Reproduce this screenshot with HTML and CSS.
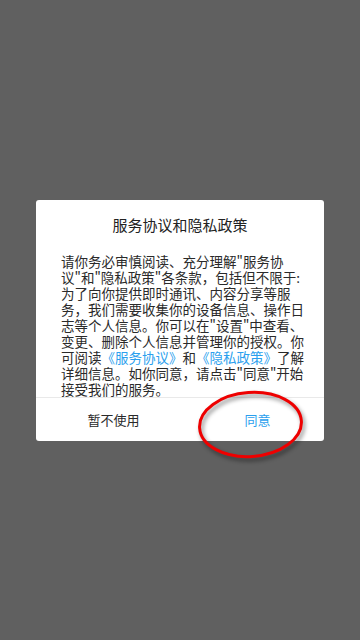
FILE: index.html
```html
<!DOCTYPE html>
<html lang="zh-CN">
<head>
<meta charset="utf-8">
<meta name="viewport" content="width=360, initial-scale=1">
<title>服务协议和隐私政策</title>
<link rel="stylesheet" href="styles.css">
</head>
<body>
<div class="screen">
  <div class="dialog">
    <div class="dialog-title">服务协议和隐私政策</div>
    <div class="dialog-body">请你务必审慎阅读、充分理解"服务协<br>议"和"隐私政策"各条款，包括但不限于:<br>为了向你提供即时通讯、内容分享等服<br>务，我们需要收集你的设备信息、操作日<br>志等个人信息。你可以在"设置"中查看、<br>变更、删除个人信息并管理你的授权。你<br>可阅读<span class="link">《服务协议》</span>和<span class="link">《隐私政策》</span>了解<br>详细信息。如你同意，请点击"同意"开始<br>接受我们的服务。</div>
    <div class="dialog-actions">
      <div class="btn btn-cancel">暂不使用</div>
      <div class="btn btn-ok">同意</div>
    </div>
  </div>
</div>
<svg class="annotation" width="360" height="640" viewBox="0 0 360 640" xmlns="http://www.w3.org/2000/svg">
  <ellipse cx="250.5" cy="424.5" rx="51" ry="32" transform="rotate(-4 250.5 424.5)" fill="none" stroke="#ee0000" stroke-width="3"/>
</svg>
</body>
</html>
```

FILE: styles.css
```css
html, body {
  margin: 0;
  padding: 0;
}
body {
  width: 360px;
  height: 640px;
  background: #606060;
  font-family: "Noto Sans CJK SC", "Noto Sans", sans-serif;
  overflow: hidden;
}
.screen {
  height: 640px;
  display: flex;
  align-items: center;
  justify-content: center;
}
.dialog {
  width: 288px;
  background: #ffffff;
  border-radius: 3px;
}
.dialog-title {
  padding-top: 14px;
  font-size: 15px;
  line-height: 22px;
  height: 22px;
  text-align: center;
  color: #222222;
}
.dialog-body {
  margin-top: 17px;
  padding: 0 20px 0 25px;
  font-size: 13.5px;
  line-height: 16px;
  color: #2a2a2a;
  white-space: nowrap;
  border-bottom: 1px solid #e9e9e9;
}
.link {
  color: #2b9fee;
}
.dialog-actions {
  display: grid;
  grid-template-columns: 155px 1fr;
  height: 43px;
}
.btn {
  display: flex;
  align-items: center;
  justify-content: center;
  font-size: 13px;
}
.btn-cancel {
  color: #2a2a2a;
}
.btn-ok {
  color: #2b9fee;
}
.annotation {
  position: absolute;
  left: 0;
  top: 0;
  pointer-events: none;
  filter: drop-shadow(2px 3px 2px rgba(0, 0, 0, 0.45));
}
```
